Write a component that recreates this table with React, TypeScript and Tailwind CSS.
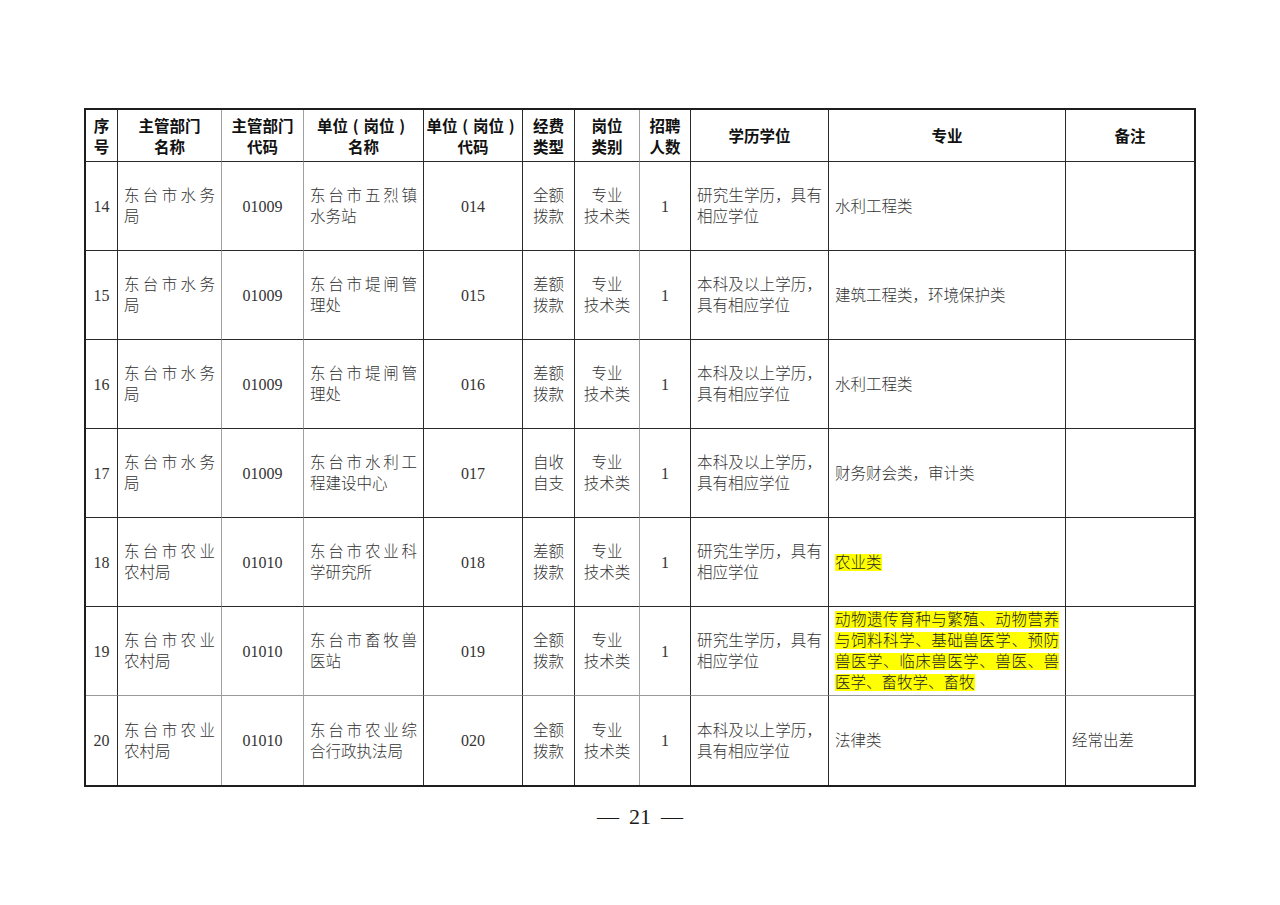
// --- Types
type Row = {
  no: string;
  dept: string;
  deptCode: string;
  unit: string;
  unitCode: string;
  fund: [string, string];
  major: string;
  highlight?: boolean;
  edu: string;
  note?: string;
};

// --- Data
const GRAD = "研究生学历，具有相应学位";
const UNDER = "本科及以上学历，具有相应学位";

const rows: Row[] = [
  { no: "14", dept: "东台市水务局", deptCode: "01009", unit: "东台市五烈镇水务站", unitCode: "014", fund: ["全额", "拨款"], edu: GRAD, major: "水利工程类" },
  { no: "15", dept: "东台市水务局", deptCode: "01009", unit: "东台市堤闸管理处", unitCode: "015", fund: ["差额", "拨款"], edu: UNDER, major: "建筑工程类，环境保护类" },
  { no: "16", dept: "东台市水务局", deptCode: "01009", unit: "东台市堤闸管理处", unitCode: "016", fund: ["差额", "拨款"], edu: UNDER, major: "水利工程类" },
  { no: "17", dept: "东台市水务局", deptCode: "01009", unit: "东台市水利工程建设中心", unitCode: "017", fund: ["自收", "自支"], edu: UNDER, major: "财务财会类，审计类" },
  { no: "18", dept: "东台市农业农村局", deptCode: "01010", unit: "东台市农业科学研究所", unitCode: "018", fund: ["差额", "拨款"], edu: GRAD, major: "农业类", highlight: true },
  {
    no: "19",
    dept: "东台市农业农村局",
    deptCode: "01010",
    unit: "东台市畜牧兽医站",
    unitCode: "019",
    fund: ["全额", "拨款"],
    edu: GRAD,
    major: "动物遗传育种与繁殖、动物营养与饲料科学、基础兽医学、预防兽医学、临床兽医学、兽医、兽医学、畜牧学、畜牧",
    highlight: true,
  },
  { no: "20", dept: "东台市农业农村局", deptCode: "01010", unit: "东台市农业综合行政执法局", unitCode: "020", fund: ["全额", "拨款"], edu: UNDER, major: "法律类", note: "经常出差" },
];

// header "单位（岗位）": the scan sets each bracket centred in its own em box
const UnitLabel = () => (
  <div>
    单位<span className="inline-block w-[1em] text-center">(</span>岗位
    <span className="inline-block w-[1em] text-center">)</span>
  </div>
);

const headers: React.ReactNode[][] = [
  ["序", "号"],
  ["主管部门", "名称"],
  ["主管部门", "代码"],
  [<UnitLabel key="u1" />, "名称"],
  [<UnitLabel key="u2" />, "代码"],
  ["经费", "类型"],
  ["岗位", "类别"],
  ["招聘", "人数"],
  ["学历学位"],
  ["专业"],
  ["备注"],
];

// --- Helpers
// vertical rules after columns 1, 2 and 6 are lighter in the scan
const rightBorder = (col: number) => {
  if (col === 10) return "";
  if (col === 1 || col === 2 || col === 6) return "border-r border-r-[#a0a0a0]";
  return "border-r border-r-[#2a2a2a]";
};

const bottomBorder = (row: number) => {
  if (row === rows.length - 1) return "";
  if (row === 5) return "border-b border-b-[#9a9a9a]";
  return "border-b border-b-[#2a2a2a]";
};

// --- Main Component
const App = () => {
  return (
    <div className="min-h-[905px] w-[1280px] bg-white pt-[108px] pl-[84px] text-[#333] font-light font-['Liberation_Serif','Noto_Sans_CJK_SC',serif]">
      <div className="w-[1112px] border-2 border-[#1e1e1e] grid grid-cols-[32px_104px_82px_120px_99px_52px_65px_51px_138px_237px_128px] grid-rows-[52px_89px_89px_89px_89px_89px_89px_89px]">
        {/* Header */}
        {headers.map((lines, i) => (
          <div
            key={`h${i}`}
            className={`box-border flex items-center justify-center text-center border-b border-b-[#2a2a2a] ${rightBorder(i)} text-[15.5px] leading-[21px] font-bold text-[#111] whitespace-nowrap font-['Noto_Sans_CJK_SC',sans-serif]`}
          >
            <div>
              {lines.map((l, k) => (
                <div key={k}>{l}</div>
              ))}
            </div>
          </div>
        ))}

        {/* Rows */}
        {rows.map((r, ri) => {
          const cell = `box-border flex items-center text-[15.5px] leading-[21px] ${bottomBorder(ri)}`;
          const center = `${cell} justify-center text-center`;
          return [
            <div key={`${ri}-0`} className={`${center} ${rightBorder(0)} text-[16px]`}>
              {r.no}
            </div>,
            <div key={`${ri}-1`} className={`${cell} ${rightBorder(1)} px-[6px]`}>
              <div className="w-full text-justify">{r.dept}</div>
            </div>,
            <div key={`${ri}-2`} className={`${center} ${rightBorder(2)} text-[16px]`}>
              {r.deptCode}
            </div>,
            <div key={`${ri}-3`} className={`${cell} ${rightBorder(3)} px-[6px]`}>
              <div className="w-full text-justify">{r.unit}</div>
            </div>,
            <div key={`${ri}-4`} className={`${center} ${rightBorder(4)} text-[16px]`}>
              {r.unitCode}
            </div>,
            <div key={`${ri}-5`} className={`${center} ${rightBorder(5)}`}>
              <div>
                <div>{r.fund[0]}</div>
                <div>{r.fund[1]}</div>
              </div>
            </div>,
            <div key={`${ri}-6`} className={`${center} ${rightBorder(6)}`}>
              <div>
                <div>专业</div>
                <div>技术类</div>
              </div>
            </div>,
            <div key={`${ri}-7`} className={`${center} ${rightBorder(7)} text-[16px]`}>
              1
            </div>,
            <div key={`${ri}-8`} className={`${cell} ${rightBorder(8)} px-[6px]`}>
              <div className="w-full text-justify">{r.edu}</div>
            </div>,
            <div key={`${ri}-9`} className={`${cell} ${rightBorder(9)} px-[6px]`}>
              <div className="w-full text-justify">
                {r.highlight ? <span className="bg-[#ffff00] text-[#222]">{r.major}</span> : r.major}
              </div>
            </div>,
            <div key={`${ri}-10`} className={`${cell} ${rightBorder(10)} px-[6px]`}>
              <div className="w-full">{r.note ?? ""}</div>
            </div>,
          ];
        })}
      </div>

      {/* Page number */}
      <div className="w-[1112px] mt-[19px] flex justify-center gap-[10px] text-[22px] leading-none font-normal text-[#1a1a1a]">
        <span>—</span>
        <span>21</span>
        <span>—</span>
      </div>
    </div>
  );
};

export default App;
